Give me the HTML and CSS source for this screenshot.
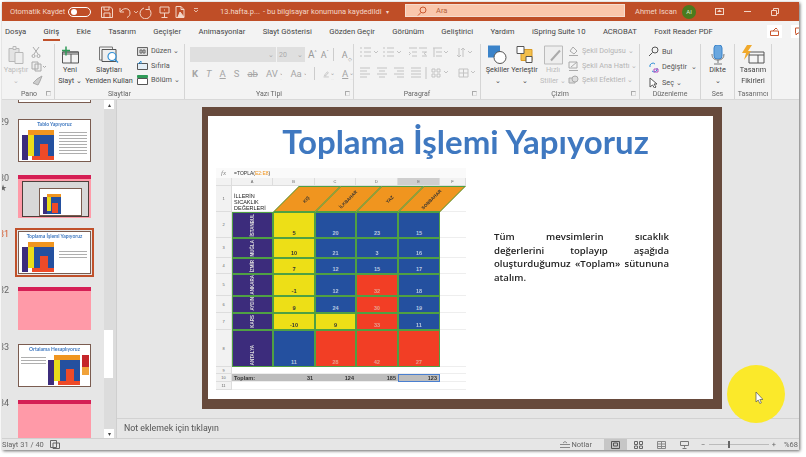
FILE: index.html
```html
<!DOCTYPE html>
<html lang="tr">
<head>
  <meta charset="UTF-8" />
  <title>13.hafta - PowerPoint</title>
  <link rel="stylesheet" href="styles.css">
</head>
<body>
  <div class="window">
    <header class="titlebar">
      <span class="autosave">Otomatik Kaydet</span>
      <span class="toggle"><i></i></span>
      <svg class="qa" width="100" height="14" viewBox="0 0 100 14" fill="none" stroke="#f3d6c8">
        <path d="M1.500 2h9l2 2v8.500h-11zM4 2v3h5V2M4 12.500V8h6v4.500"/>
        <path d="M20 3v4h4M20.500 6.500C24 2 30 3 30 8c0 2-1 3.500-3 4.500"/>
        <path d="M34 6l2 2 2-2" stroke-width=".8"/>
        <path d="M44 3a5.500 5.500 0 1 0 5 1M49 1v3.500h-3.500"/>
        <path d="M60 2h9v6h-9zM64.500 8v4M61.500 12.500h6M64.500 4.500v1"/>
        <path d="M76 1.500h5l3 3v8h-8zM81 1.500v3h3"/><path d="M80 7l4 5h-6z" fill="#f3d6c8"/>
        <path d="M94 5l2 2 2-2M94 3.500h4" stroke-width=".8"/>
      </svg>
      <span class="doc-name">13.hafta.p...</span>
      <span class="doc-state">- bu bilgisayar konumuna kaydedildi</span>
      <span class="doc-caret">▾</span>
      <div class="search">
        <svg width="10" height="10" viewBox="0 0 10 10" fill="none" stroke="#c9572f"><circle cx="6" cy="4" r="3"/><path d="M4 6.500L1 9.500"/></svg>
        <span>Ara</span>
      </div>
      <span class="user">Ahmet Iscan</span>
      <span class="avatar">AI</span>
      <svg class="win-btn" width="9" height="8" viewBox="0 0 9 8" fill="#f3d6c8"><path d="M0 0h9v7H0zM1 1v5h7V1z" fill-rule="evenodd"/><path d="M4.500 1.500L7 4H2z"/></svg>
      <span class="win-min"></span>
      <svg class="win-restore" width="8" height="8" viewBox="0 0 8 8" fill="none" stroke="#f3d6c8"><path d="M.500 2.500h5v5h-5zM2.500 2.500v-2h5v5h-2"/></svg>
    </header>

    <nav class="tabs">
      <span class="tab t-dosya">Dosya</span>
      <span class="tab active">Giriş</span>
      <span class="tab">Ekle</span>
      <span class="tab">Tasarım</span>
      <span class="tab">Geçişler</span>
      <span class="tab">Animasyonlar</span>
      <span class="tab">Slayt Gösterisi</span>
      <span class="tab">Gözden Geçir</span>
      <span class="tab">Görünüm</span>
      <span class="tab">Geliştirici</span>
      <span class="tab">Yardım</span>
      <span class="tab">iSpring Suite 10</span>
      <span class="tab">ACROBAT</span>
      <span class="tab">Foxit Reader PDF</span>
      <span class="tab-spacer"></span>
      <span class="tab-btn"><svg width="9" height="9" viewBox="0 0 9 9" fill="none" stroke="#c9572f"><path d="M.500 4h8v4.500h-8zM3 4l3-3 1.500 1.500"/></svg></span>
      <span class="tab-btn cut"><svg width="8" height="9" viewBox="0 0 8 9" fill="none" stroke="#c9572f"><path d="M.500 1h8v5H3L1 8V6H.500z"/></svg></span>
    </nav>

    <section class="ribbon">
      <div class="group g-pano">
        <div class="body">
          <div class="big dim w24">
            <svg width="16" height="19" viewBox="0 0 16 19" fill="#e3e3e3" stroke="#b8b8b8"><path d="M1 3h10v13H1z"/><path d="M5 1h3v3H5zM7 7h8v11H7z" fill="#eee"/></svg>
            <span>Yapıştır</span><em>⌄</em>
          </div>
          <div class="tools">
            <svg width="10" height="12" viewBox="0 0 10 12" fill="none" stroke="#aaa"><path d="M2 1l5 7M8 1L3 8"/><circle cx="2.500" cy="10" r="1.500"/><circle cx="7.500" cy="10" r="1.500"/></svg>
            <svg width="15" height="11" viewBox="0 0 15 11" fill="#eee" stroke="#aaa"><path d="M1 1h6v7H1zM4 3h6v7H4z"/><path d="M12 5l1.500 1.500L15 5" fill="none"/></svg>
            <svg width="12" height="11" viewBox="0 0 12 11" fill="#ccc" stroke="#aaa"><path d="M6 4l5-3-2 5-2 4-5-2z"/></svg>
          </div>
        </div>
        <div class="label">Pano<i class="launch"></i></div>
      </div>

      <div class="group g-slides">
        <div class="body">
          <div class="big w30 dark">
            <svg width="19" height="17" viewBox="0 0 19 17" fill="none"><path d="M1.500 5.500h16v11h-16z" fill="#f4f4f4" stroke="#555"/><path d="M1.500 5.500h16v2h-16zM10 7.500v9" stroke="#555"/><path d="M5 0v9M1 4h8" stroke="#2f9a58" stroke-width="1.500"/></svg>
            <span>Yeni</span><span>Slayt ⌄</span>
          </div>
          <div class="big w46 dark">
            <svg width="20" height="17" viewBox="0 0 20 17" fill="none"><path d="M.5.500h13v13H.5z" stroke="#777"/><path d="M3 3h14v12H3z" fill="#eee" stroke="#555"/><circle cx="13" cy="10" r="4" fill="#fff" stroke="#2e8fd6" stroke-width="1.200"/><path d="M16 13l3 3" stroke="#2e8fd6" stroke-width="1.200"/></svg>
            <span>Slaytları</span><span>Yeniden Kullan</span>
          </div>
          <ul class="list">
            <li><svg width="11" height="9" viewBox="0 0 11 9" fill="#ddd" stroke="#666"><path d="M.5.500h10v8H.5z"/><path d="M3 3h2v3H3zM6 3h2v3H6z"/></svg>Düzen ⌄</li>
            <li><svg width="11" height="9" viewBox="0 0 11 9" fill="#e4eef6" stroke="#555"><path d="M.5 2.500h10v6H.5z"/><path d="M1 3l3-3v3" fill="none" stroke="#2e8fd6"/></svg>Sıfırla</li>
            <li><svg width="11" height="10" viewBox="0 0 11 10" fill="#fff" stroke="#555"><path d="M.5 3.500h10v6H.5z"/><path d="M.5.500h10v2H.5z" fill="#2f9a58" stroke="#2f9a58"/></svg>Bölüm ⌄</li>
          </ul>
        </div>
        <div class="label">Slaytlar</div>
      </div>

      <div class="group g-font">
        <div class="body col">
          <div class="font-row">
            <span class="combo name">⌄</span>
            <span class="combo size">20<b>⌄</b></span>
            <span class="glyph">A<sup>^</sup></span>
            <span class="glyph small">A<sup>ˇ</sup></span>
            <span class="rule"></span>
            <span class="glyph small">A<sub>◇</sub></span>
          </div>
          <div class="font-row fmt">
            <b>K</b><i>T</i><u>A</u><span>S</span><s>ab</s><span>AV</span><span class="c">⌄</span><span>Aa</span><span class="c">⌄</span>
            <span class="rule"></span>
            <svg width="12" height="12" viewBox="0 0 12 12" fill="none" stroke="#a5a5a5"><path d="M3 8l5-6 2 1.500-5 6H3zM1 11.500h10"/></svg><span class="c">⌄</span><u>A</u><span class="c">⌄</span>
          </div>
        </div>
        <div class="label">Yazı Tipi<i class="launch"></i></div>
      </div>

      <div class="group g-para">
        <div class="body col">
          <svg width="120" height="14" viewBox="0 0 120 14" fill="none" stroke="#c3c3c3">
            <path d="M1 2h2M1 6h2M1 10h2M5 2h7M5 6h7M5 10h7M15 5l2 2 2-2M24 2h2M24 6h2M24 10h2M28 2h7M28 6h7M28 10h7M38 5l2 2 2-2M50 2h8M53 6h5M53 10h5M50 6l1.500 1.500L50 9M60 2h8M63 6h5M63 10h5M67 9l-2-1.500L67 6M74 2h9M77 6h6M77 10h6M75 2v9M85 5l2 2 2-2M100 2v9M104 2v9M98 9l2 2 2-2M102 4l2-2 2 2M109 5l2 2 2-2"/>
          </svg>
          <svg width="120" height="14" viewBox="0 0 120 14" fill="none" stroke="#c3c3c3">
            <path d="M1 2h10M1 5h7M1 8h10M1 11h7M18 2h10M20 5h6M18 8h10M20 11h6M35 2h10M38 5h7M35 8h10M38 11h7M52 2h10M52 5h10M52 8h10M52 11h10M67 1v12M73 3h3v3h-3zM78 3h3v3h-3zM73 8h3v3h-3zM78 8h3v3h-3zM85 5l2 2 2-2M100 3h9v8h-9zM104.500 3v8M100 7h9M112 5l2 2 2-2"/>
          </svg>
        </div>
        <div class="label">Paragraf<i class="launch"></i></div>
      </div>

      <div class="group g-draw">
        <div class="body">
          <div class="big w27 dark">
            <svg width="19" height="19" viewBox="0 0 19 19"><path d="M0 0h12v12H0z" fill="#3b83c9"/><circle cx="12" cy="12" r="6" fill="#fff" stroke="#555"/></svg>
            <span>Şekiller</span><em>⌄</em>
          </div>
          <div class="big w27 dark">
            <svg width="18" height="19" viewBox="0 0 18 19"><path d="M5 4h11v11H5z" fill="#f3c04c" stroke="#d99a24"/><path d="M1 1h7v7H1zM10 11h6v6h-6z" fill="#fff" stroke="#555"/></svg>
            <span>Yerleştir</span><em>⌄</em>
          </div>
          <div class="big w24 dim">
            <svg width="19" height="19" viewBox="0 0 19 19" fill="none"><path d="M.5.500h18v18H.5z" fill="#eee" stroke="#bbb"/><path d="M7 15l9-10" stroke="#aaa" stroke-width="2"/></svg>
            <span>Hızlı</span><span>Stiller ⌄</span>
          </div>
          <ul class="list dimmed">
            <li><svg width="11" height="10" viewBox="0 0 11 10" fill="none" stroke="#aaa"><path d="M5 1l4 4-3 3-4-3zM1 9.500h9"/></svg>Şekil Dolgusu ⌄</li>
            <li><svg width="11" height="10" viewBox="0 0 11 10" fill="none" stroke="#aaa"><path d="M1 1h8v6H1zM3 6l6-5M1 9.500h9"/></svg>Şekil Ana Hattı ⌄</li>
            <li><svg width="11" height="10" viewBox="0 0 11 10" fill="#ddd" stroke="#aaa"><path d="M1 3h6v5H1z"/><circle cx="7" cy="4" r="3"/></svg>Şekil Efektleri ⌄</li>
          </ul>
        </div>
        <div class="label">Çizim<i class="launch"></i></div>
      </div>

      <div class="group g-edit">
        <div class="body">
          <ul class="list">
            <li><svg width="11" height="11" viewBox="0 0 11 11" fill="none" stroke="#555"><circle cx="7" cy="4" r="3"/><path d="M4.500 6.500L1 10"/></svg>Bul</li>
            <li><svg width="11" height="11" viewBox="0 0 11 11" fill="none" stroke="#2e8fd6"><path d="M2 5a3 3 0 0 1 5-3M9 6a3 3 0 0 1-5 3"/><path d="M6 7h4v3H6z" stroke="#b44cc0"/></svg>Değiştir &nbsp;⌄</li>
            <li><svg width="11" height="11" viewBox="0 0 11 11" fill="#fff" stroke="#555"><path d="M2 1v9l2.500-2 2 3 1.500-1-2-3h3z"/></svg>Seç ⌄</li>
          </ul>
        </div>
        <div class="label">Düzenleme</div>
      </div>

      <div class="group g-ses">
        <div class="body">
          <div class="big dark wide">
            <svg width="14" height="20" viewBox="0 0 14 20"><rect x="3" y="0" width="8" height="14" rx="3" fill="#6aa7df" stroke="#3b83c9"/><path d="M1 9c0 4 2 6 6 6s6-2 6-6M7 15v3M3 19h8" fill="none" stroke="#777"/></svg>
            <span>Dikte</span><em>⌄</em>
          </div>
        </div>
        <div class="label">Ses</div>
      </div>

      <div class="group g-design">
        <div class="body">
          <div class="big dark wide">
            <svg width="24" height="20" viewBox="0 0 24 20" fill="none"><path d="M8 7h15v11H8z" fill="#f5f5f5" stroke="#555"/><path d="M8 10h15M17 10v8" stroke="#555"/><path d="M6 0h5L7 6h3l-7 9 2-7H1z" fill="#f0a92c"/></svg>
            <span>Tasarım</span><span>Fikirleri</span>
          </div>
        </div>
        <div class="label">Tasarımcı</div>
      </div>
    </section>

    <div class="main">
      <aside class="thumbs">
        <div class="thumb-list">
          <div class="thumb-row stub"><div class="thumb framed"></div></div>
          <div class="thumb-row"><span class="num">29</span>
            <div class="thumb framed"><p class="t-title">Tablo Yapıyoruz</p><div class="t-body"><span class="mini"></span><span class="lines"></span></div></div>
          </div>
          <div class="thumb-row"><span class="num">30<br>★</span>
            <div class="thumb pink"><div class="band"></div><div class="shot"><div class="shot-slide"><span class="mini"></span></div></div></div>
          </div>
          <div class="thumb-row current"><span class="num">31</span>
            <div class="thumb framed"><p class="t-title">Toplama İşlemi Yapıyoruz</p><div class="t-body"><span class="mini"></span><span class="lines short"></span></div></div>
          </div>
          <div class="thumb-row"><span class="num">32</span>
            <div class="thumb pink"><div class="band"></div></div>
          </div>
          <div class="thumb-row"><span class="num">33</span>
            <div class="thumb framed"><p class="t-title">Ortalama Hesaplıyoruz</p><div class="t-body rev"><span class="lines short"></span><span class="mini"></span><span class="swatch"></span></div></div>
          </div>
          <div class="thumb-row"><span class="num">34</span>
            <div class="thumb pink"><div class="band"></div></div>
          </div>
        </div>
        <div class="vscroll"><span class="arrow">▴</span><span class="track"><i></i></span><span class="arrow">▾</span></div>
      </aside>

      <div class="editor">
        <div class="stage">
          <div class="slide">
            <h1>Toplama İşlemi Yapıyoruz</h1>
            <div class="slide-row">
              <div class="sheet">
                <div class="fx"><i>fx</i><span>=TOPLA(<b>E2:E8</b>)</span></div>
                <div class="grid">
                  <div class="hd"></div><div class="hd">A</div><div class="hd">B</div><div class="hd">C</div><div class="hd">D</div><div class="hd on">E</div><div class="hd">F</div>

                  <div class="hd r">1</div>
                  <div class="c intro">İLLERİN<br>SICAKLIK<br>DEĞERLERİ</div>
                  <div class="c or"><span>KIŞ</span></div><div class="c or"><span>İLKBAHAR</span></div><div class="c or"><span>YAZ</span></div><div class="c or"><span>SONBAHAR</span></div><div class="c"></div>

                  <div class="hd r">2</div><div class="c city"><span>İSTANBUL</span></div><div class="c ye">5</div><div class="c bl">20</div><div class="c bl">23</div><div class="c bl">15</div><div class="c"></div>
                  <div class="hd r">3</div><div class="c city"><span>MUĞLA</span></div><div class="c ye">10</div><div class="c bl">21</div><div class="c bl">3</div><div class="c bl">16</div><div class="c"></div>
                  <div class="hd r">4</div><div class="c city"><span>İZMİR</span></div><div class="c ye">7</div><div class="c bl">12</div><div class="c bl">15</div><div class="c bl">17</div><div class="c"></div>
                  <div class="hd r">5</div><div class="c city"><span>ANKARA</span></div><div class="c ye">-1</div><div class="c bl">12</div><div class="c re">32</div><div class="c bl">18</div><div class="c"></div>
                  <div class="hd r">6</div><div class="c city"><span>AYDIN</span></div><div class="c ye">9</div><div class="c bl">24</div><div class="c re">30</div><div class="c bl">19</div><div class="c"></div>
                  <div class="hd r">7</div><div class="c city"><span>KARS</span></div><div class="c ye">-10</div><div class="c ye">9</div><div class="c re">33</div><div class="c bl">11</div><div class="c"></div>
                  <div class="hd r">8</div><div class="c city"><span>ANTALYA</span></div><div class="c bl">11</div><div class="c re">28</div><div class="c re">42</div><div class="c re">27</div><div class="c"></div>
                  <div class="hd r">9</div><div class="c"></div><div class="c"></div><div class="c"></div><div class="c"></div><div class="c"></div><div class="c"></div>
                  <div class="hd r">10</div><div class="c tot left">Toplam:</div><div class="c tot">31</div><div class="c tot">124</div><div class="c tot">185</div><div class="c tot sel">123</div><div class="c"></div>
                  <div class="hd r">11</div><div class="c"></div><div class="c"></div><div class="c"></div><div class="c"></div><div class="c"></div><div class="c"></div>
                </div>
              </div>
              <p class="note">
                <span>Tüm mevsimlerin sıcaklık</span>
                <span>değerlerini toplayıp aşağıda</span>
                <span>oluşturduğumuz «Toplam» sütununa</span>
                <span class="end">atalım.</span>
              </p>
            </div>
          </div>
        </div>
        <div class="notes">Not eklemek için tıklayın</div>
      </div>
    </div>

    <footer class="status">
      <span class="count">Slayt 31 / 40</span>
      <svg width="10" height="9" viewBox="0 0 10 9" fill="none" stroke="#666"><path d="M.5.500h6v7h-6zM3 3h6.500v5.500H3z"/></svg>
      <span class="spacer"></span>
      <svg width="10" height="7" viewBox="0 0 10 7" fill="none" stroke="#888"><path d="M0 3.500h10M0 6.500h10M3 2l2-1.500L7 2"/></svg>
      <span class="notlar">Notlar</span>
      <span class="view on"><svg width="9" height="8" viewBox="0 0 9 8" fill="none" stroke="#555"><path d="M.5.500h8v7h-8zM2.500 2h4v3h-4z"/></svg></span>
      <span class="view"><svg width="9" height="8" viewBox="0 0 9 8" fill="none" stroke="#666"><path d="M.5.500h3v3h-3zM5.500.500h3v3h-3zM.5 5h3v2.500h-3zM5.500 5h3v2.500h-3z"/></svg></span>
      <span class="view"><svg width="9" height="8" viewBox="0 0 9 8" fill="none" stroke="#888"><path d="M.5.500h8v7h-8zM4.500.500v7M.5 3h8M.5 5.500h8"/></svg></span>
      <span class="view"><svg width="9" height="8" viewBox="0 0 9 8" fill="none" stroke="#777"><path d="M.5.500h8v4h-8zM4.500 4.500v2M2.500 7.500h4"/></svg></span>
      <span class="zoom-ctl minus">−</span>
      <span class="slider"><i></i></span>
      <span class="zoom-ctl plus">+</span>
      <span class="pct">%68</span>
    </footer>

    <div class="pointer">
      <svg width="8" height="12" viewBox="0 0 8 12"><path d="M1 0v10l2.200-2 1.600 3.500 1.600-.7L4.800 7.500H8z" fill="#fff" stroke="#555" stroke-width=".7"/></svg>
    </div>
  </div>
</body>
</html>
```

FILE: styles.css
```css
* { box-sizing: border-box; }
html, body {
  margin: 0;
  height: 100%;
  background: #fff;
  overflow: hidden;
}
body {
  font-family: Roboto, "Liberation Sans", sans-serif;
  font-size: 8px;
  color: #555;
}
ul { list-style: none; margin: 0; padding: 0; }
p, h1 { margin: 0; }

.window {
  position: relative;
  width: 797px;
  height: 448px;
  margin: 2px 0 0 2px;
  display: flex;
  flex-direction: column;
  background: #e6e6e6;
  box-shadow: 1px 1px 3px rgba(0,0,0,0.6);
  overflow: hidden;
  filter: blur(0.4px);
}

/* title bar */
.titlebar {
  height: 19px;
  flex: none;
  display: flex;
  align-items: center;
  background: #bf4e27;
  color: #f3d6c8;
  font-size: 7.500px;
  white-space: nowrap;
}
.autosave { margin-left: 8px; width: 57px; }
.toggle {
  width: 23px;
  height: 10px;
  border: 1px solid #fff;
  border-radius: 5px;
  margin-left: 1px;
  display: flex;
  align-items: center;
  padding-left: 2px;
}
.toggle i { width: 6px; height: 6px; background: #fff; border-radius: 50%; }
.qa { margin-left: 9px; }
.doc-name { margin-left: 20px; width: 43px; }
.doc-state { margin-left: 0; }
.doc-caret { margin-left: 4px; font-size: 6px; }
.search {
  position: absolute;
  left: 403px;
  top: 2px;
  width: 220px;
  height: 13px;
  background: #fac7ac;
  border: 1px solid #f4ddd0;
  display: flex;
  align-items: center;
  gap: 9px;
  padding-left: 11px;
  color: #b5623c;
}
.user { margin-left: auto; width: 47px; }
.avatar {
  width: 14px;
  height: 14px;
  border-radius: 50%;
  background: #4a7b1e;
  color: #dfe9cf;
  font-size: 6px;
  display: flex;
  align-items: center;
  justify-content: center;
}
.win-btn { margin-left: 19px; }
.win-min { width: 7px; height: 1px; background: #f3d6c8; margin-left: 20px; }
.win-restore { margin-left: 20px; margin-right: 20px; }

/* tabs */
.tabs {
  height: 21px;
  flex: none;
  display: flex;
  align-items: center;
  gap: 17.400px;
  padding-left: 3px;
  background: #f3f3f3;
  font-size: 7.700px;
  color: #444;
  white-space: nowrap;
}
.tab { line-height: 12px; }
.tab.active { position: relative; color: #333; }
.tab.active::after {
  content: "";
  position: absolute;
  left: -1px;
  right: -1px;
  bottom: -3px;
  height: 2px;
  background: #c0502a;
}
.tab-spacer { flex: 1; }
.tab-btn {
  width: 15px;
  height: 13px;
  background: #fff;
  display: flex;
  align-items: center;
  justify-content: center;
  flex: none;
}
.tab-btn.cut { margin-left: -8px; margin-right: -7px; }

/* ribbon */
.ribbon {
  height: 58px;
  flex: none;
  display: flex;
  background: #f3f3f3;
  border-bottom: 1px solid #d8d8d8;
  padding: 2px 0 0 2px;
}
.group {
  display: flex;
  flex-direction: column;
  border-right: 1px solid #d5d5d5;
  height: 55px;
}
.body { flex: 1; display: flex; min-height: 0; }
.body.col { flex-direction: column; gap: 5px; padding: 3px 0 0 5px; }
.label {
  height: 11px;
  line-height: 12px;
  text-align: center;
  font-size: 7px;
  color: #666;
  position: relative;
}
.launch {
  position: absolute;
  right: 3px;
  top: 3px;
  width: 5px;
  height: 5px;
  border-left: 1px solid #aaa;
  border-top: 1px solid #aaa;
  border-bottom: 1px solid #ddd;
  border-right: 1px solid #ddd;
}
.g-pano { width: 51px; }
.g-slides { width: 130px; }
.g-font { width: 169px; }
.g-para { width: 127px; }
.g-draw { width: 159px; }
.g-edit { width: 61px; }
.g-ses { width: 34px; }
.g-design { width: 37px; }

.big {
  display: flex;
  flex-direction: column;
  align-items: center;
  line-height: 10.500px;
  font-size: 7.300px;
  white-space: nowrap;
  padding-top: 1px;
}
.big svg { height: 20px; flex: none; }
.big em { font-style: normal; font-size: 7px; line-height: 10px; }
.big.dark { color: #444; }
.big.dim { color: #bbb; }
.w24 { width: 24px; }
.w27 { width: 27px; }
.w30 { width: 30px; }
.w46 { width: 48px; }
.wide { flex: 1; }
.tools {
  display: flex;
  flex-direction: column;
  align-items: flex-start;
  gap: 3px;
  padding: 2px 0 0 3px;
}
.list {
  display: flex;
  flex-direction: column;
  gap: 4.500px;
  padding-top: 2px;
  color: #555;
  font-size: 7.300px;
  line-height: 10px;
  white-space: nowrap;
}
.list li { display: flex; align-items: center; gap: 3px; }
.list.dimmed { color: #b5b5b5; margin-left: 3px; }
.g-slides .list { margin-left: 4px; }
.g-draw .body { padding-left: 3px; }
.g-draw .big.dim { margin-left: 3px; }
.g-edit .body { padding-left: 8px; }

.font-row { display: flex; align-items: center; height: 15px; }
.combo {
  height: 15px;
  background: #dfdfdf;
  color: #aaa;
  font-size: 7px;
  display: flex;
  align-items: center;
}
.combo.name { width: 87px; justify-content: flex-end; padding-right: 2px; border-right: 1px solid #f3f3f3; }
.combo.size { width: 28px; justify-content: space-between; padding: 0 2px; }
.combo b { font-weight: 400; }
.glyph { color: #999; font-size: 10px; margin-left: 3px; line-height: 12px; }
.glyph.small { font-size: 9px; margin-left: 4px; }
.glyph sup, .glyph sub { font-size: 5px; line-height: 0; }
.rule { width: 1px; height: 13px; background: #ccc; margin: 0 4px; }
.fmt { gap: 8px; color: #a5a5a5; font-size: 9.500px; padding-left: 2px; }
.fmt b, .fmt i, .fmt u, .fmt span, .fmt s { line-height: 12px; }
.fmt .c { font-size: 6px; margin-left: -6px; }
.fmt .rule { margin: 0; }
.g-font .body.col { gap: 4px; }
.g-para .body.col { gap: 6px; padding-top: 2px; }

/* main area */
.main { flex: 1; display: flex; min-height: 0; }
.thumbs {
  width: 115px;
  flex: none;
  display: flex;
  border-right: 1px solid #cfcfcf;
}
.thumb-list {
  width: 102px;
  display: flex;
  flex-direction: column;
  overflow: hidden;
}
.thumb-row {
  height: 56.300px;
  flex: none;
  display: flex;
  align-items: flex-start;
  padding-left: 16px;
  position: relative;
}
.thumb-row.stub { height: 3px; margin-bottom: 15.500px; align-items: flex-end; }
.thumb-row.stub .thumb { flex: none; height: 4px; border-top: 0; }
.num {
  position: absolute;
  left: -3px;
  top: -2px;
  font-size: 9px;
  line-height: 10px;
  color: #666;
}
.current .num { color: #d4572a; }
.thumb {
  width: 73px;
  height: 43px;
  background: #fff;
  overflow: hidden;
}
.thumb.framed { border: 1px solid #7a5c50; }
.current .thumb { outline: 2px solid #c0502a; outline-offset: 1px; }
.thumb.pink { background: #ff9aa8; }
.band { height: 4px; background: #d51f55; }
.t-title {
  text-align: center;
  font-family: Lato, sans-serif;
  font-size: 5px;
  font-weight: 700;
  line-height: 7px;
  margin-top: 1px;
  color: #3f78c0;
  white-space: nowrap;
}
.t-body { display: flex; gap: 3px; padding-left: 3px; margin-top: 2px; }
.t-body.rev { padding-left: 2px; gap: 2px; }
.mini {
  width: 32px;
  height: 30px;
  flex: none;
  background:
    linear-gradient(#ee4a28, #ee4a28) 10px 26px / 22px 4px no-repeat,
    linear-gradient(#ee4a28, #ee4a28) 18px 14px / 8px 12px no-repeat,
    linear-gradient(#e9dd1a, #e9dd1a) 6px 5px / 6px 21px no-repeat,
    linear-gradient(#f0951f, #f0951f) 6px 0 / 26px 5px no-repeat,
    linear-gradient(#24509f, #24509f) 12px 5px / 20px 25px no-repeat,
    linear-gradient(#3c2c7c, #3c2c7c) 0 5px / 6px 25px no-repeat;
}
.lines {
  flex: 1;
  margin: 2px 3px 0 2px;
  height: 24px;
  background: repeating-linear-gradient(#8c8c8c 0 1px, #fff 1px 3px);
  opacity: .7;
}
.lines.short { height: 9px; margin-top: 9px; }
.t-body.rev .lines { margin: 2px 0; width: 25px; flex: none; }
.swatch {
  width: 7px;
  height: 20px;
  background: linear-gradient(#c5262a 0 60%, #f0a23a 60%);
}
.pink .shot {
  margin: 2px 2px 0 4px;
  height: 36px;
  background: #d8d8d8;
  border: 1px solid #4d3d38;
  padding: 6px 6px 0 16px;
}
.shot-slide {
  height: 28px;
  background: #fff;
  border: 1px solid #7a5c50;
  padding: 5px 0 0 3px;
}
.shot-slide .mini { display: block; width: 18px; height: 20px; background-size: 0 0, 6px 10px, 4px 14px, 16px 3px, 14px 17px, 4px 17px; background-position: 0 0, 9px 9px, 4px 3px, 4px 0, 4px 3px, 0 3px; }

.vscroll {
  width: 12px;
  margin-left: 1px;
  display: flex;
  flex-direction: column;
  background: #dcdcdc;
}
.arrow {
  height: 9px;
  background: #fff;
  margin: 0 2px 0 0;
  font-size: 6px;
  line-height: 9px;
  text-align: center;
  color: #444;
}
.track { flex: 1; padding-top: 221px; }
.track i { display: block; width: 9px; height: 48px; background: #fff; }

.editor { flex: 1; display: flex; flex-direction: column; min-width: 0; }
.stage { height: 318px; flex: none; padding: 7px 0 0 85px; }
.notes {
  flex: 1;
  border-top: 1px solid #d2d2d2;
  padding: 3px 0 0 7px;
  font-size: 8.800px;
  line-height: 12px;
  color: #555;
}

/* slide */
.slide {
  width: 520px;
  height: 302px;
  background: #fff;
  border: solid #674a3c;
  border-width: 9px 9px 10px 6px;
}
h1 {
  font-family: Lato, sans-serif;
  font-size: 33px;
  font-weight: 700;
  line-height: 38px;
  text-align: center;
  color: #3f78c0;
  padding: 6px 0 0 10px;
}
.slide-row { display: flex; padding: 8px 0 0 8px; }

.sheet { width: 250px; flex: none; }
.fx {
  height: 10px;
  display: flex;
  align-items: center;
  gap: 8px;
  background: #fafafa;
  padding-left: 5px;
  font-size: 5px;
  color: #333;
  font-family: "Liberation Sans", sans-serif;
}
.fx i { font-family: "Liberation Serif", serif; font-size: 7px; color: #888; }
.fx b { font-weight: 400; color: #f0951f; }
.grid {
  display: grid;
  grid-template-columns: 16px 41px 42px 41px 42px 42px 26px;
  grid-template-rows: 8px 26px 26px 20px 16px 22px 17px 17px 37px 7px 8px 8px;
  font-family: "Liberation Sans", sans-serif;
  font-size: 5.500px;
  font-weight: 700;
  background: #fff;
}
.hd {
  background: #f2f2f2;
  border-right: 1px solid #ddd;
  border-bottom: 1px solid #ddd;
  color: #666;
  font-size: 4px;
  font-weight: 400;
  display: flex;
  align-items: center;
  justify-content: center;
}
.hd.on { background: #cfcfcf; }
.c {
  border-bottom: 1px solid #eee;
  display: flex;
  align-items: flex-end;
  justify-content: center;
  overflow: hidden;
}
.intro {
  display: block;
  font-weight: 400;
  font-size: 5.500px;
  line-height: 6px;
  padding: 7px 0 0 2px;
  color: #222;
  white-space: nowrap;
}
.or {
  background: #f0951f;
  border: 1px solid #4fa043;
  transform: skewX(-45deg);
  transform-origin: bottom left;
  align-items: center;
  overflow: visible;
}
.or span { transform: skewX(45deg) rotate(-45deg); font-size: 4.500px; color: #333; white-space: nowrap; }
.city, .ye, .bl, .re {
  border: 1px solid #4fa043;
  padding-bottom: 1px;
}
.city { background: #3c2c7c; color: #ddd; }
.city span { writing-mode: vertical-rl; transform: rotate(180deg); font-size: 4.500px; white-space: nowrap; }
.ye { background: #eddf17; color: #333; }
.bl { background: #24509f; color: #b8c8e0; }
.re { background: #f23e25; color: #e8a090; }
.tot {
  background: #bdbdbd;
  justify-content: flex-end;
  align-items: center;
  padding-right: 2px;
  color: #333;
}
.tot.left { justify-content: flex-start; padding-left: 2px; }
.tot.sel { border: 1px solid #4a7fd0; }

.note {
  width: 175px;
  margin: 62px 0 0 28px;
  font-family: "Open Sans", sans-serif;
  font-size: 9.600px;
  font-weight: 600;
  line-height: 13.700px;
  color: #222;
  white-space: nowrap;
}
.note span {
  display: block;
  text-align: justify;
  text-align-last: justify;
}
.note .end { text-align-last: left; }

/* status bar */
.status {
  height: 12px;
  flex: none;
  display: flex;
  align-items: center;
  background: #e6e6e6;
  border-top: 1px solid #d0d0d0;
  color: #666;
  font-size: 7.500px;
  white-space: nowrap;
}
.count { width: 48px; }
.spacer { flex: 1; }
.notlar { margin: 0 12px 0 1px; }
.view { width: 23px; height: 11px; display: flex; align-items: center; justify-content: center; }
.view.on { background: #c6c6c6; }
.zoom-ctl { width: 6px; text-align: center; }
.minus { margin-left: 4px; }
.plus { margin-left: 2px; }
.slider {
  width: 60px;
  height: 1px;
  background: #bbb;
  margin-left: 3px;
  position: relative;
}
.slider i { position: absolute; left: 19px; top: -3px; width: 2px; height: 7px; background: #666; }
.pct { margin-left: 7px; width: 15px; }

/* screen recorder highlight */
.pointer {
  position: absolute;
  left: 725px;
  top: 363px;
  width: 58px;
  height: 58px;
  border-radius: 50%;
  background: #fbe92a;
  display: flex;
  align-items: center;
  justify-content: center;
  padding: 7px 0 0 5px;
}
```
